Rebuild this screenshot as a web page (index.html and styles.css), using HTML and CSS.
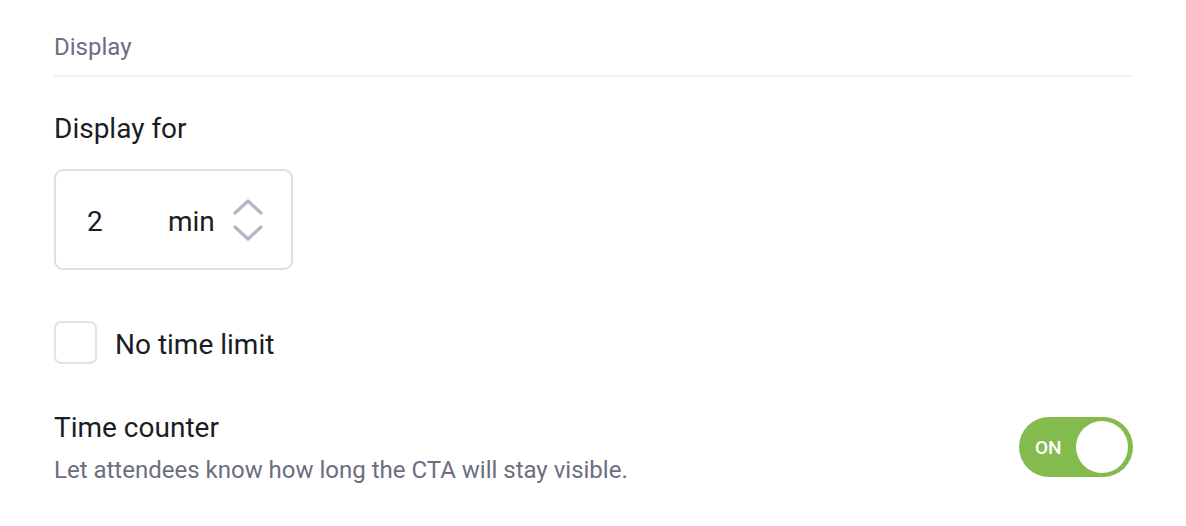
FILE: index.html
```html
<!DOCTYPE html>
<html>
<head>
<meta charset="utf-8">
<link rel="stylesheet" href="styles.css">
</head>
<body>
<div class="panel">
  <div class="section-title">Display</div>
  <div class="label">Display for</div>
  <div class="number-input">
    <span class="value">2</span>
    <span class="unit">min</span>
    <svg class="spinner" width="32" height="46" viewBox="0 0 32 46">
      <path d="M3 15 L16 3 L29 15" fill="none" stroke="#b2b6c8" stroke-width="3.2" stroke-linecap="round" stroke-linejoin="round"/>
      <path d="M3 29 L16 41 L29 29" fill="none" stroke="#b2b6c8" stroke-width="3.2" stroke-linecap="round" stroke-linejoin="round"/>
    </svg>
  </div>
  <label class="check-row">
    <span class="checkbox"></span>
    <span class="check-label">No time limit</span>
  </label>
  <div class="toggle-row">
    <div class="toggle-text">
      <div class="toggle-title">Time counter</div>
      <div class="toggle-desc">Let attendees know how long the CTA will stay visible.</div>
    </div>
    <div class="toggle">
      <span class="toggle-on">ON</span>
      <span class="knob"></span>
    </div>
  </div>
</div>
</body>
</html>
```
FILE: styles.css
```css
html, body {
  margin: 0;
  padding: 0;
  background: #ffffff;
}
.panel {
  padding: 31px 53px 0 54px;
  display: flex;
  flex-direction: column;
}
.section-title {
  font-family: Roboto, "Liberation Sans", sans-serif;
  font-size: 24px;
  color: #6b6e80;
  line-height: 32px;
  padding-bottom: 12px;
  border-bottom: 2px solid #f0f0f5;
}
.label {
  font-family: Roboto, "Liberation Sans", sans-serif;
  font-size: 28px;
  color: #1b1c24;
  line-height: 36px;
  margin-top: 34px;
}
.number-input {
  margin-top: 22px;
  width: 235px;
  height: 97px;
  border: 2px solid #dedfea;
  border-radius: 9px;
  display: flex;
  align-items: center;
  font-family: Roboto, "Liberation Sans", sans-serif;
  font-size: 28px;
  color: #1b1c24;
}
.value {
  margin-left: 31px;
  width: 81px;
  padding-top: 3px;
}
.unit {
  width: 64px;
  padding-top: 3px;
}
.spinner {
  display: block;
  margin-top: 3px;
}
.check-row {
  margin-top: 51px;
  display: flex;
  align-items: flex-start;
}
.checkbox {
  width: 39px;
  height: 39px;
  border: 2px solid #dfe2ee;
  border-radius: 7px;
}
.check-label {
  margin-left: 18px;
  margin-top: 6px;
  font-family: Roboto, "Liberation Sans", sans-serif;
  font-size: 28px;
  line-height: 36px;
  color: #1b1c24;
}
.toggle-row {
  margin-top: 46px;
  display: flex;
  justify-content: space-between;
  align-items: flex-start;
}
.toggle-title {
  font-family: Roboto, "Liberation Sans", sans-serif;
  font-size: 28px;
  color: #1b1c24;
  line-height: 36px;
}
.toggle-desc {
  font-family: Roboto, "Liberation Sans", sans-serif;
  font-size: 24px;
  color: #6b6e80;
  margin-top: 8px;
  line-height: 32px;
}
.toggle {
  margin-top: 7px;
  width: 114px;
  height: 60px;
  border-radius: 30px;
  background: #84bb4f;
  display: flex;
  align-items: center;
  justify-content: space-between;
  box-sizing: border-box;
  padding: 0 5px 0 16px;
}
.toggle-on {
  font-family: Roboto, "Liberation Sans", sans-serif;
  font-weight: 500;
  font-size: 19px;
  color: #ffffff;
}
.knob {
  width: 52px;
  height: 52px;
  border-radius: 50%;
  background: #ffffff;
}
```
